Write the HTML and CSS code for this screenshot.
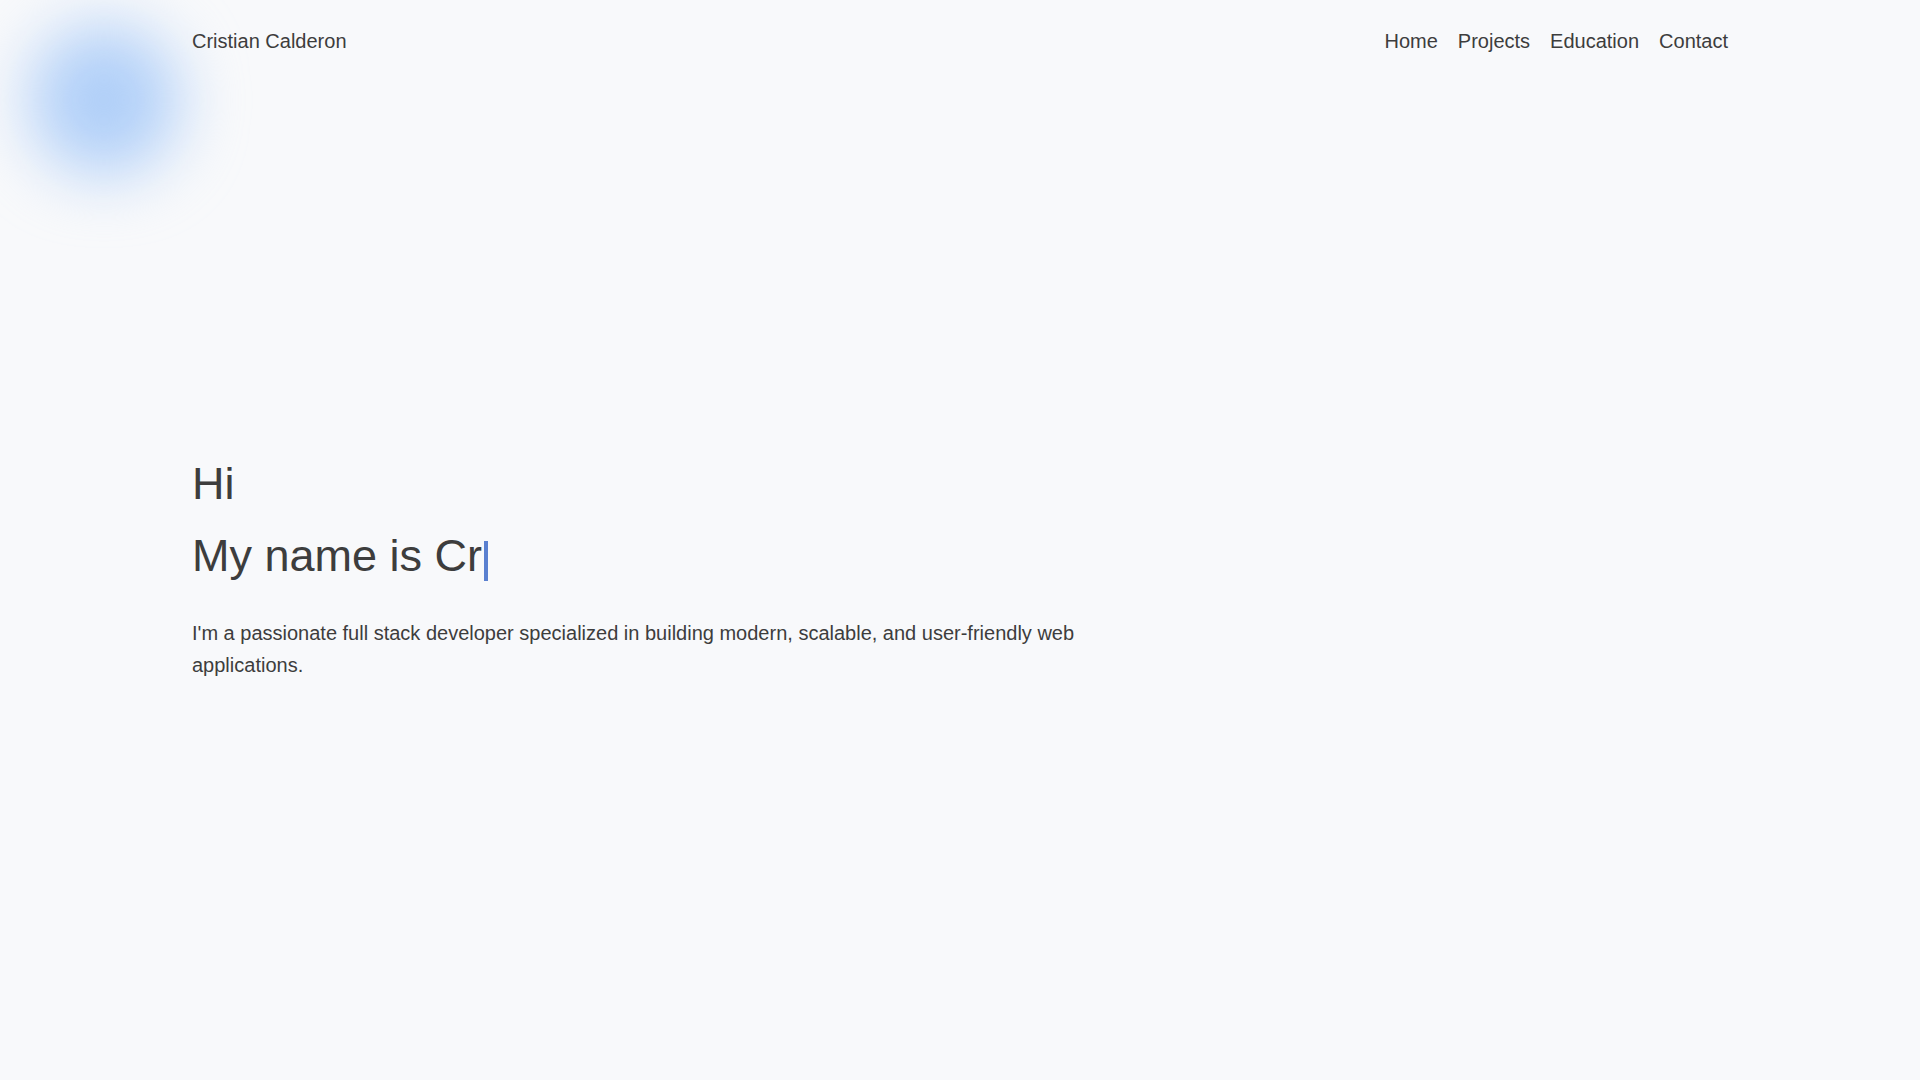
FILE: index.html
```html
<!DOCTYPE html>
<html lang="en">
<head>
<meta charset="utf-8">
<title>Cristian Calderon</title>
<link rel="stylesheet" href="styles.css">
</head>
<body>
<div class="blob"></div>
<header class="header">
  <div class="container nav">
    <a class="brand" href="#">Cristian Calderon</a>
    <nav class="links">
      <a href="#">Home</a>
      <a href="#">Projects</a>
      <a href="#">Education</a>
      <a href="#">Contact</a>
    </nav>
  </div>
</header>
<main class="container hero">
  <h1 class="title">Hi</h1>
  <h2 class="title">My name is Cr<span class="cursor"></span></h2>
  <p class="intro">I'm a passionate full stack developer specialized in building modern, scalable, and user-friendly web applications.</p>
</main>
</body>
</html>
```

FILE: styles.css
```css
html, body {
  margin: 0;
  padding: 0;
}
body {
  background: #f8f9fb;
  color: #3d3d3d;
  font-family: "Liberation Sans", Arial, sans-serif;
  min-height: 1080px;
  overflow: hidden;
}
a {
  color: inherit;
  text-decoration: none;
}
.blob {
  position: absolute;
  left: 29px;
  top: 25px;
  width: 150px;
  height: 150px;
  border-radius: 50%;
  background: #b0cff8;
  filter: blur(32px);
  pointer-events: none;
}
.container {
  max-width: 1536px;
  margin: 0 auto;
  position: relative;
}
.header {
  padding-top: 27px;
}
.nav {
  display: flex;
  justify-content: space-between;
  align-items: center;
  font-size: 20px;
  line-height: 28px;
}
.links {
  display: flex;
  gap: 20px;
}
.hero {
  padding-top: 393px;
}
.title {
  margin: 0;
  font-weight: 400;
  font-size: 45px;
  line-height: 72px;
  color: #3d3d3d;
}
.cursor {
  display: inline-block;
  width: 4px;
  height: 40px;
  background: #5a80d0;
  vertical-align: -10px;
  margin-left: 2px;
}
.intro {
  margin: 25px 0 0;
  max-width: 896px;
  font-size: 20px;
  line-height: 32px;
  color: #3d3d3d;
}
```
